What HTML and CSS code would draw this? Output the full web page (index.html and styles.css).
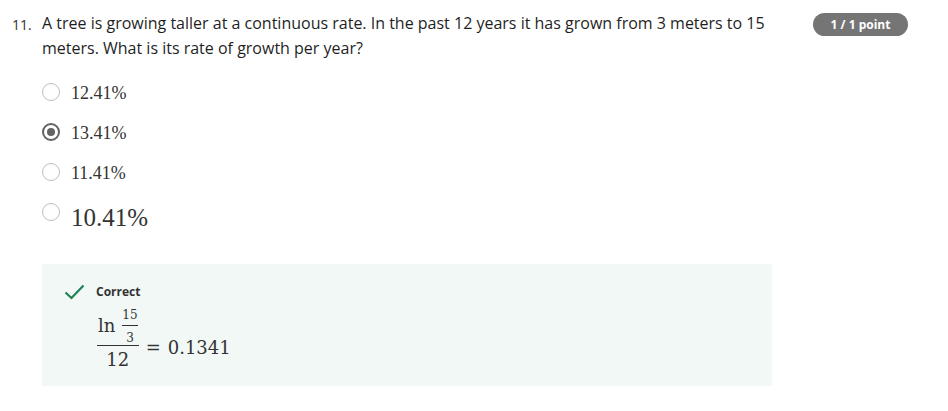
FILE: index.html
```
<!DOCTYPE html>
<html lang="en">
<head>
<meta charset="utf-8">
<title>Question 11</title>
<link rel="stylesheet" href="styles.css">
</head>
<body>
<div class="question">
  <div class="qnum">11.</div>
  <div class="qmain">
    <div class="qtext">A tree is growing taller at a continuous rate. In the past 12 years it has grown from 3 meters to 15 meters. What is its rate of growth per year?</div>
    <div class="options">
      <div class="option"><span class="radio"></span><span class="label">12.41%</span></div>
      <div class="option"><span class="radio checked"></span><span class="label">13.41%</span></div>
      <div class="option"><span class="radio"></span><span class="label">11.41%</span></div>
      <div class="option option-big"><span class="radio"></span><span class="label label-big">10.41%</span></div>
    </div>
    <div class="feedback">
      <div class="fb-head">
        <svg class="check" width="21" height="16" viewBox="0 0 21 16"><path d="M1.5 8.5 L7.5 14 L19.5 1.5" fill="none" stroke="#1f8354" stroke-width="2.2"/></svg>
        <span class="fb-title">Correct</span>
      </div>
      <div class="math">
        <span class="frac">
          <span class="num">
            <span class="ln">ln</span>
            <span class="frac small">
              <span class="num">15</span>
              <span class="den">3</span>
            </span>
          </span>
          <span class="den">12</span>
        </span>
        <span class="rhs"><span class="eq">=</span><span class="val">0.1341</span></span>
      </div>
    </div>
  </div>
  <div class="badge">1 / 1 point</div>
</div>
</body>
</html>
```
FILE: styles.css
```
html, body {
  margin: 0;
  padding: 0;
  background: #ffffff;
}
body {
  font-family: "Open Sans", "Noto Sans", sans-serif;
  color: #1f1f1f;
  width: 948px;
}
.question {
  display: flex;
  align-items: flex-start;
  padding: 11px 0 0 12px;
}
.qnum {
  width: 30px;
  font-size: 14px;
  line-height: 25px;
  padding-top: 1px;
  color: #333333;
}
.qmain {
  width: 730px;
}
.qtext {
  font-size: 16px;
  line-height: 25px;
  color: #1f1f1f;
}
.options {
  margin-top: 11px;
}
.option {
  display: flex;
  align-items: flex-start;
  height: 40px;
}
.option-big {
  height: 41px;
}
.radio {
  box-sizing: border-box;
  width: 18px;
  height: 18px;
  margin-top: 11px;
  border: 1.5px solid #bdbdbd;
  border-radius: 50%;
  display: flex;
  align-items: center;
  justify-content: center;
  flex: none;
}
.radio.checked {
  border: 2px solid #636363;
}
.radio.checked::after {
  content: "";
  width: 8px;
  height: 8px;
  border-radius: 50%;
  background: #636363;
}
.label {
  font-family: "Liberation Serif", "Times New Roman", serif;
  font-size: 18px;
  line-height: 24px;
  padding-top: 8.5px;
  margin-left: 11px;
  color: #333333;
}
.label-big {
  font-size: 25px;
  line-height: 30px;
  padding-top: 11px;
}
.feedback {
  margin-top: 31px;
  background: #f2f8f6;
  height: 122px;
  box-sizing: border-box;
  padding: 19.5px 0 0 22px;
}
.fb-head {
  display: flex;
  align-items: center;
  height: 16px;
}
.check {
  display: block;
}
.fb-title {
  margin-left: 11px;
  font-size: 12px;
  line-height: 16px;
  font-weight: 700;
  color: #333333;
}
.math {
  display: flex;
  align-items: flex-start;
  margin-left: 33px;
  margin-top: 8px;
  font-family: "DejaVu Serif", serif;
  color: #333333;
}
.frac {
  display: inline-flex;
  flex-direction: column;
  align-items: stretch;
}
.frac > .num {
  display: flex;
  align-items: center;
  justify-content: center;
  padding: 0 1px;
}
.frac > .den {
  display: block;
  text-align: center;
  border-top: 1px solid #333333;
  font-size: 18px;
  line-height: 20px;
  padding-top: 4px;
}
.ln {
  font-size: 18px;
  line-height: 20px;
  margin-right: 7px;
}
.frac.small > .num {
  font-size: 12px;
  line-height: 14px;
  padding: 0 0 3px;
}
.frac.small > .den {
  font-size: 12px;
  line-height: 14px;
  padding-top: 5.5px;
}
.rhs {
  display: flex;
  font-size: 18px;
  line-height: 20px;
  margin-top: 30px;
  margin-left: 7px;
}
.val {
  margin-left: 7px;
}
.badge {
  margin-left: 41px;
  margin-top: 2px;
  height: 23px;
  width: 95px;
  border-radius: 12px;
  background: #757575;
  color: #ffffff;
  font-size: 12px;
  font-weight: 700;
  line-height: 23px;
  text-align: center;
}
```
